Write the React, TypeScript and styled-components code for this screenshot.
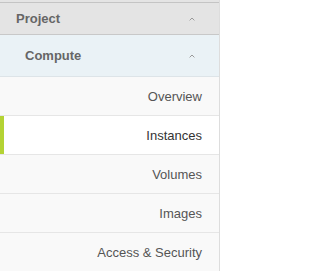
import React from "react";
import styled, { createGlobalStyle } from "styled-components";

const GlobalStyle = createGlobalStyle`
  html, body {
    margin: 0;
    padding: 0;
    background: #ffffff;
  }
  body {
    font-family: "Liberation Sans", Arial, Helvetica, sans-serif;
    -webkit-font-smoothing: antialiased;
  }
`;

const Sidebar = styled.nav`
  width: 220px;
  box-sizing: border-box;
  border-right: 1px solid #dddddd;
  background: #e4e4e4;
  padding-top: 2px;
`;

const PanelHeader = styled.div`
  display: flex;
  align-items: center;
  justify-content: space-between;
  height: 31px;
  padding: 0 24px 0 16px;
  background: #e4e4e4;
  border-top: 1px solid #c4c4c4;
  border-bottom: 1px solid #c8c8c8;
  color: #666666;
  font-size: 13px;
  font-weight: bold;
`;

const GroupHeader = styled.div`
  display: flex;
  align-items: center;
  justify-content: space-between;
  height: 41px;
  padding: 0 24px 0 25px;
  background: #eaf2f6;
  border-bottom: 1px solid #dde4e8;
  color: #666666;
  font-size: 13px;
  font-weight: bold;
`;

const Item = styled.a<{ $active?: boolean }>`
  position: relative;
  display: flex;
  align-items: center;
  justify-content: flex-end;
  height: 38px;
  padding-right: 17px;
  background: ${(p) => (p.$active ? "#ffffff" : "#f9f9f9")};
  border-bottom: 1px solid #e6e6e6;
  color: ${(p) => (p.$active ? "#333333" : "#555555")};
  font-size: 13px;
  text-decoration: none;

  &::before {
    content: "";
    display: ${(p) => (p.$active ? "block" : "none")};
    position: absolute;
    left: 0;
    top: 0;
    bottom: 0;
    width: 4px;
    background: #b4d334;
  }
`;

function Chevron() {
  return (
    <svg width="6" height="4" viewBox="0 0 6 4" aria-hidden="true">
      <path d="M0.6 3.4 L3 1 L5.4 3.4" fill="none" stroke="#9a9a9a" strokeWidth="1" />
    </svg>
  );
}

const items = ["Overview", "Instances", "Volumes", "Images", "Access & Security"];

export default function App() {
  return (
    <>
      <GlobalStyle />
      <Sidebar>
        <PanelHeader>
          <span>Project</span>
          <Chevron />
        </PanelHeader>
        <GroupHeader>
          <span>Compute</span>
          <Chevron />
        </GroupHeader>
        {items.map((label) => (
          <Item key={label} href="#" $active={label === "Instances"}>
            {label}
          </Item>
        ))}
      </Sidebar>
    </>
  );
}
